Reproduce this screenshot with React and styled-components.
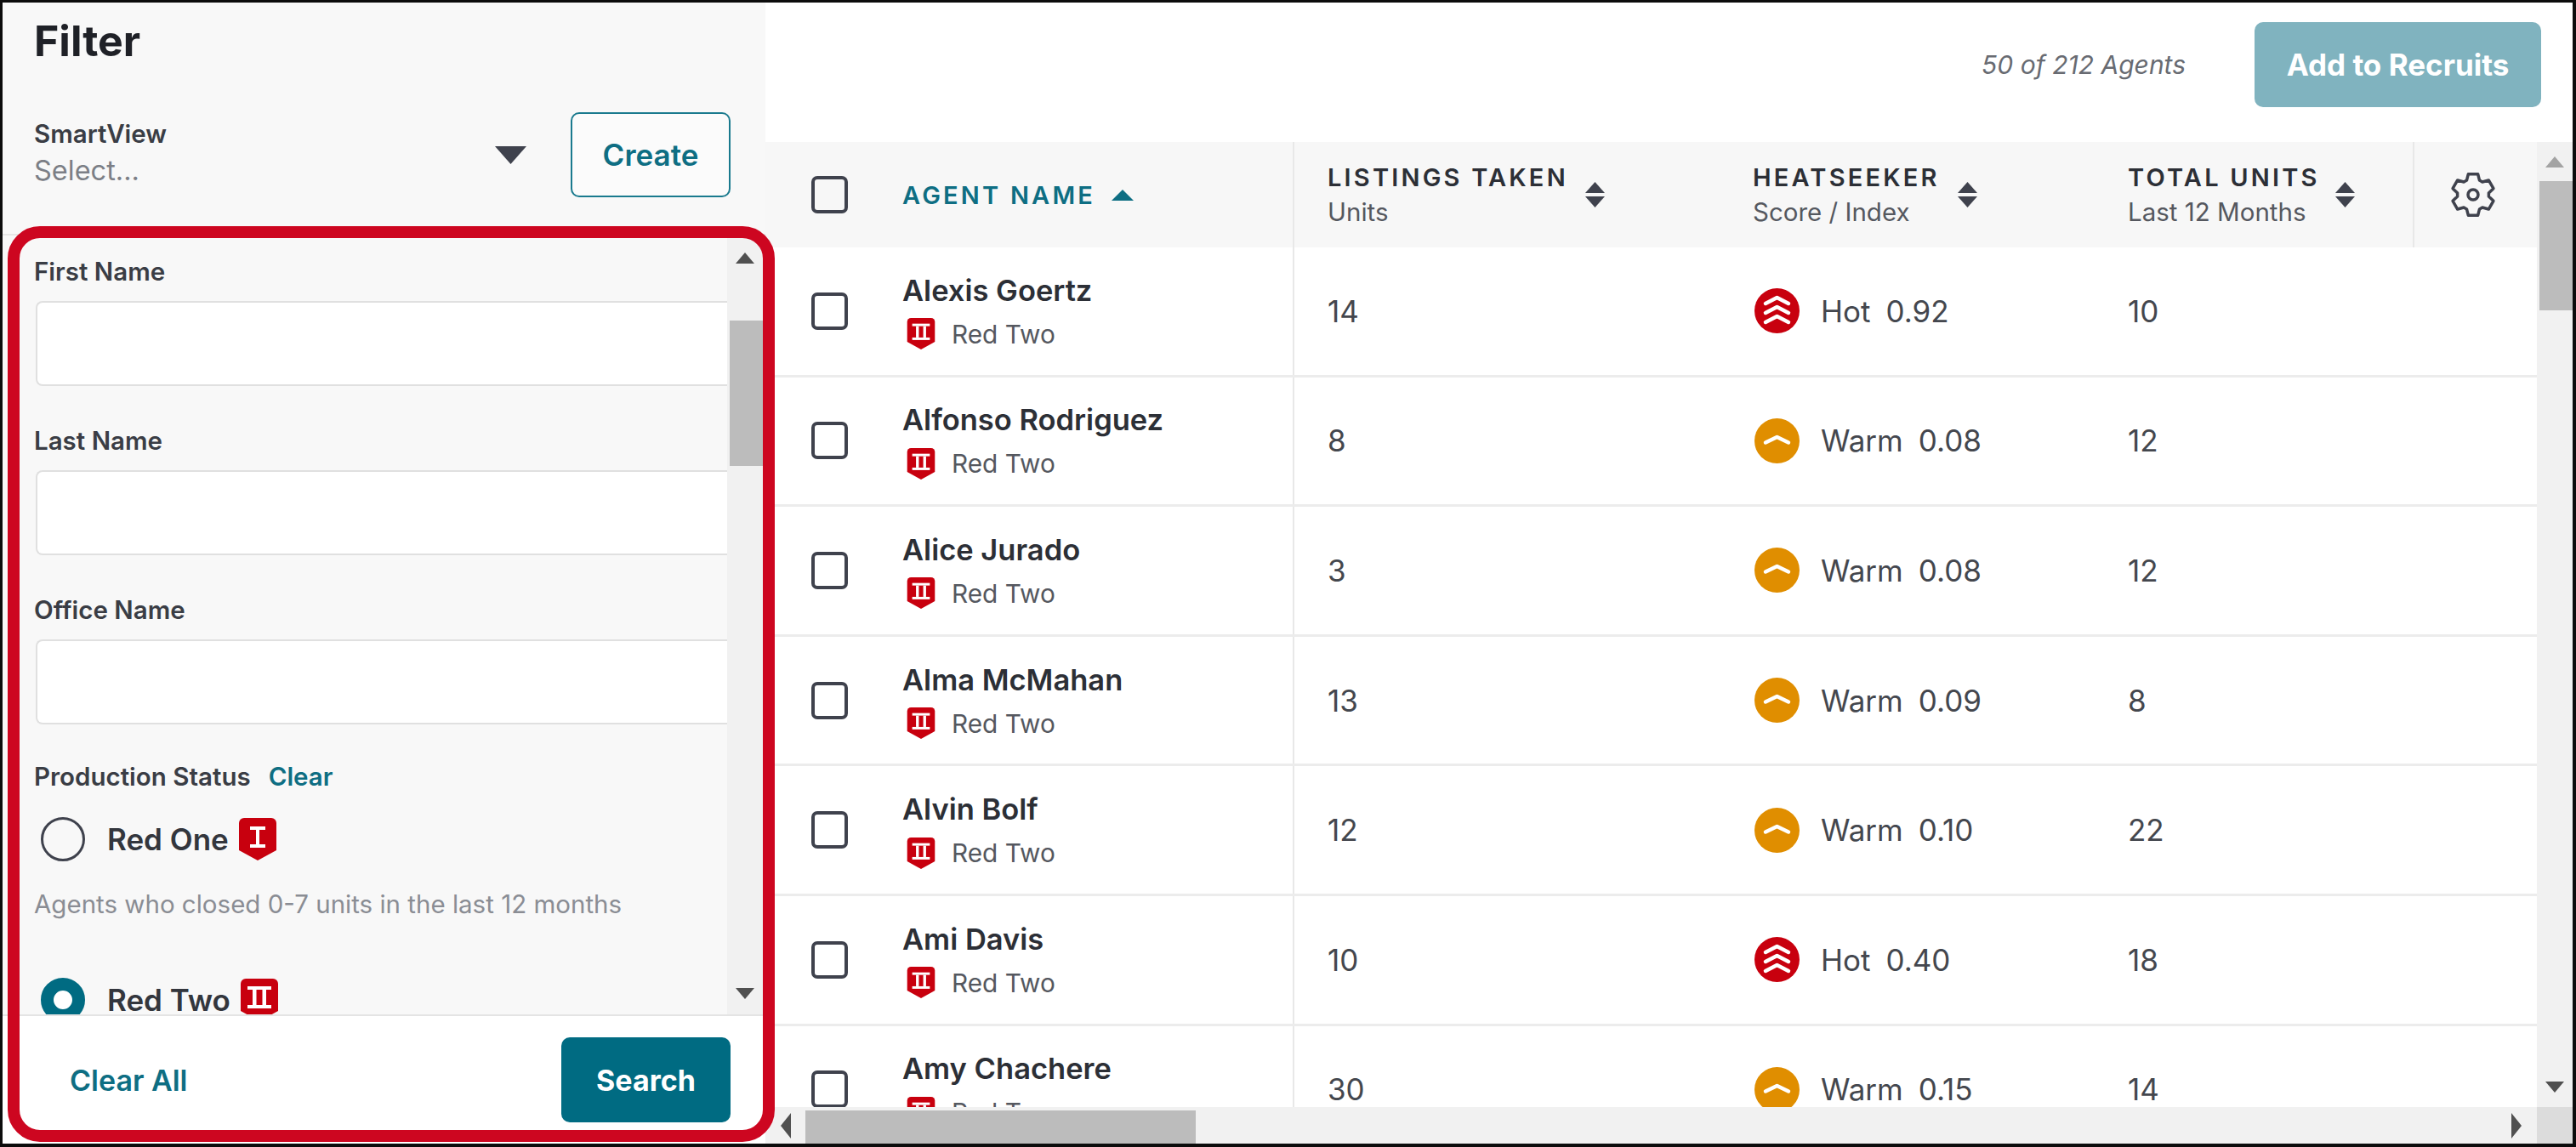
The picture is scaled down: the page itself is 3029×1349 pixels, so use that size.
import React from 'react';
import styled, { createGlobalStyle } from 'styled-components';

const GlobalStyle = createGlobalStyle`
  html, body { margin: 0; padding: 0; background: #fff; }
  body { font-family: "Inter", "Open Sans", sans-serif; color: #2c2f36; }
  * { box-sizing: border-box; }
`;

const Frame = styled.div`
  position: relative;
  display: flex;
  width: 3029px;
  height: 1349px;
  overflow: hidden;
  border-style: solid;
  border-color: #0c0c0c;
  border-width: 3px 4px 4px 3px;
  background: #fff;
`;

/* the red call-out drawn on top of the screenshot */
const Highlight = styled.div`
  position: absolute;
  left: 6px;
  top: 263px;
  width: 902px;
  height: 1077px;
  border: 14px solid #cd0620;
  border-radius: 38px;
  pointer-events: none;
`;

const Sidebar = styled.aside`
  display: flex;
  flex-direction: column;
  flex: none;
  width: 897px;
  height: 100%;
  background: #f8f8f8;
`;

const SidebarHead = styled.div`
  flex: none;
  height: 274px;
  padding-top: 17px;
  border-bottom: 2px solid #e6e6e6;
`;

const Title = styled.h1`
  margin: 0 0 0 37px;
  font-size: 50px;
  line-height: 56px;
  font-weight: 700;
  color: #1f2127;
`;

const SmartRow = styled.div`
  display: flex;
  align-items: center;
  margin-top: 56px;
  padding: 0 41px 0 37px;
`;

const SmartCol = styled.div`
  flex: 1;
  padding-bottom: 6px;
`;

const Label = styled.div`
  font-size: 29.5px;
  line-height: 36px;
  font-weight: 600;
  color: #3a3d45;
`;

const Placeholder = styled.div`
  margin-top: 8px;
  font-size: 32.5px;
  line-height: 36px;
  color: #7c7f86;
`;

const Caret = styled.svg`
  flex: none;
  width: 37px;
  height: 21px;
  margin-right: 52px;
  fill: #3f424d;
`;

const OutlineButton = styled.button`
  flex: none;
  width: 188px;
  height: 100px;
  border: 2px solid #1a7a8e;
  border-radius: 10px;
  background: #fbfbfb;
  color: #0e6e83;
  font-family: inherit;
  font-size: 35px;
  font-weight: 600;
`;

const FilterBody = styled.div`
  display: flex;
  flex: 1;
  min-height: 0;
`;

const FilterForm = styled.div`
  flex: 1;
  min-width: 0;
  overflow: hidden;
  padding: 24px 0 0 37px;
`;

const Field = styled.div`
  margin-bottom: 46px;
`;

const Input = styled.input`
  display: block;
  width: calc(100% - 2px);
  height: 100px;
  margin: 17px 0 0 2px;
  border: 2px solid #e0e0e0;
  border-right: 0;
  border-radius: 8px 0 0 8px;
  background: #fff;
`;

const StatusRow = styled.div`
  display: flex;
  gap: 21px;
  font-size: 29.5px;
  line-height: 30px;
  font-weight: 600;
  color: #3a3d45;
`;

const ClearLink = styled.a`
  color: #0e6e83;
`;

const RadioRow = styled.div`
  display: flex;
  align-items: center;
  height: 52px;
  margin: ${({ $top }) => $top}px 0 0 8px;
`;

const Radio = styled.span`
  flex: none;
  width: 52px;
  height: 52px;
  margin-right: 26px;
  border-radius: 50%;
  border: ${({ $on }) => ($on ? '15px solid #006b82' : '3px solid #3f424d')};
  background: ${({ $on }) => ($on ? '#fff' : 'transparent')};
`;

const RadioText = styled.span`
  margin-right: 12px;
  font-size: 35px;
  font-weight: 600;
  color: #33363d;
`;

const Hint = styled.div`
  margin-top: 32px;
  font-size: 29.5px;
  line-height: 36px;
  color: #8a8d94;
`;

const FilterFoot = styled.div`
  display: flex;
  align-items: center;
  justify-content: space-between;
  flex: none;
  height: 152px;
  padding: 0 41px 0 79px;
  border-top: 2px solid #e4e4e4;
  background: #fff;
`;

const FootLink = styled.a`
  color: #0e6e83;
  font-size: 34px;
  font-weight: 600;
`;

const SolidButton = styled.button`
  flex: none;
  width: ${({ $w }) => $w}px;
  height: 100px;
  border: 0;
  border-radius: 10px;
  background: ${({ $pale }) => ($pale ? '#80b3bf' : '#006b82')};
  color: #fff;
  font-family: inherit;
  font-size: ${({ $pale }) => ($pale ? 35 : 34)}px;
  font-weight: 700;
`;

const Scrollbar = styled.div`
  display: flex;
  flex-direction: column;
  flex: none;
  width: 42px;
  margin-right: ${({ $gap }) => $gap || 0}px;
  background: #f1f1f1;
`;

const ArrowSlot = styled.div`
  display: flex;
  align-items: center;
  justify-content: center;
  flex: none;
  height: ${({ $h }) => $h}px;
  fill: ${({ $dim }) => ($dim ? '#a3a3a3' : '#505050')};
`;

const Thumb = styled.div`
  flex: none;
  height: ${({ $h }) => $h}px;
  margin: ${({ $top }) => $top || 0}px 0 0 3px;
  background: #bcbcbc;
`;

const Spacer = styled.div`
  flex: 1;
`;

const Main = styled.main`
  display: flex;
  flex-direction: column;
  flex: 1;
  min-width: 0;
  height: 100%;
`;

const TopBar = styled.div`
  display: flex;
  align-items: center;
  justify-content: flex-end;
  flex: none;
  height: 164px;
  padding: 23px 37px 41px 0;
`;

const Count = styled.span`
  margin-right: 81px;
  font-size: 30px;
  font-style: italic;
  color: #686b72;
`;

const TableWrap = styled.div`
  display: flex;
  flex: 1;
  min-height: 0;
`;

const Table = styled.div`
  flex: 1;
  min-width: 0;
  overflow: hidden;
`;

const columns = '161px 459px 541px 441px 335px 146px';

const HeadRow = styled.div`
  display: grid;
  grid-template-columns: ${columns};
  height: 124px;
  background: #f7f7f7;
`;

const Row = styled.div`
  display: grid;
  grid-template-columns: ${columns};
  height: 152.6px;
  border-bottom: 3px solid #ececec;
`;

const CheckCell = styled.div`
  display: flex;
  align-items: center;
  padding-left: 54px;
`;

const Checkbox = styled.span`
  width: 43px;
  height: 44px;
  border: 4px solid #3f424d;
  border-radius: 7px;
`;

const Cell = styled.div`
  display: flex;
  align-items: center;
  ${({ $rule }) => $rule && 'border-left: 2px solid #e8e8e8; padding-left: 39px;'}
  ${({ $end }) => $end && 'border-left: 2px solid #e8e8e8; justify-content: center; padding-right: 6px;'}
  font-size: 35px;
  color: #44474e;
`;

const SortName = styled.div`
  display: flex;
  align-items: center;
  gap: 19px;
  font-size: 29px;
  font-weight: 600;
  letter-spacing: 3.2px;
  color: #0e6e83;
`;

const HeadText = styled.div`
  width: ${({ $w }) => $w}px;
  line-height: 41px;
`;

const HeadTitle = styled.div`
  font-size: 29px;
  font-weight: 600;
  letter-spacing: 3.2px;
  white-space: nowrap;
  color: #2c2f36;
`;

const HeadSub = styled.div`
  font-size: 29.5px;
  color: #55585f;
`;

const SortIcon = styled.svg`
  flex: none;
  width: 23px;
  height: 30px;
  margin-left: 21px;
  fill: #3f424d;
`;

const NameCell = styled.div`
  display: flex;
  flex-direction: column;
  justify-content: center;
  gap: 11px;
  padding-top: 3px;
`;

const Name = styled.div`
  font-size: 34.5px;
  line-height: 40px;
  font-weight: 600;
  color: #2c2f36;
`;

const Rank = styled.div`
  display: flex;
  align-items: center;
  gap: 19px;
  height: 40px;
  padding-left: 5px;
  font-size: 29.8px;
  color: #55585f;
`;

const Score = styled.span`
  margin-left: 18px;
`;

const HeatIcon = styled.svg`
  flex: none;
  width: 53px;
  height: 53px;
  margin: 0 25px 0 2px;
`;

const HScroll = styled.div`
  display: flex;
  align-items: stretch;
  flex: none;
  height: 43px;
  background: #f1f1f1;
`;

const HArrow = styled.div`
  display: flex;
  align-items: center;
  justify-content: center;
  flex: none;
  width: ${({ $w }) => $w}px;
  fill: #505050;
`;

const HThumb = styled.div`
  flex: none;
  width: 459px;
  margin-top: 4px;
  background: #bcbcbc;
`;

const Corner = styled.div`
  flex: none;
  width: 42px;
  background: #dcdcdc;
`;

const UpArrow = () => (
  <svg width="22" height="13" viewBox="0 0 22 13"><path d="M11 0 22 13H0z" /></svg>
);

const DownArrow = () => (
  <svg width="22" height="13" viewBox="0 0 22 13"><path d="M0 0h22L11 13z" /></svg>
);

const SideArrow = ({ flip }) => (
  <svg width="12" height="30" viewBox="0 0 12 30" style={{ transform: flip ? 'scaleX(-1)' : undefined }}>
    <path d="M0 0 12 15 0 30z" />
  </svg>
);

const SortGlyph = () => (
  <SortIcon viewBox="0 0 23 30">
    <path d="M11.5 0 23 13H0z" />
    <path d="M0 17h23L11.5 30z" />
  </SortIcon>
);

const RankBadge = ({ level, small }) => (
  <svg width={small ? 34 : 44} height={small ? 37 : 50} viewBox="0 0 44 50" style={{ flex: 'none' }}>
    <path d="M6 0h32a6 6 0 0 1 6 6v32L22 50 0 38V6a6 6 0 0 1 6-6z" fill="#c8000e" />
    {level === 1 ? (
      <path d="M13 10h18v4h-7v17h7v4H13v-4h7V14h-7z" fill="#fff" />
    ) : (
      <g fill="#fff">
        <rect x="8" y="9" width="28" height="4" />
        <rect x="8" y="31" width="28" height="4" />
        <rect x="14" y="13" width="4.500" height="18" />
        <rect x="25.500" y="13" width="4.500" height="18" />
      </g>
    )}
  </svg>
);

const Heat = ({ hot }) => (
  <HeatIcon viewBox="0 0 53 53">
    <circle cx="26.5" cy="26.5" r="26.5" fill={hot ? '#c8000e' : '#e08e00'} />
    <g fill="none" stroke="#fff" strokeWidth="4.500" strokeLinecap="round" strokeLinejoin="round">
      {hot ? (
        <>
          <path d="M13 18 26.500 11 40 18" />
          <path d="M13 29 26.500 22 40 29" />
          <path d="M13 40 26.500 33 40 40" />
        </>
      ) : (
        <path d="M13 28.500 26.500 22 40 28.500" />
      )}
    </g>
  </HeatIcon>
);

// six teeth, one pointing straight up
const gearPath = () => {
  const pts = [];
  for (let i = 0; i < 6; i++) {
    const a = -90 + i * 60;
    [[18.5, -24], [25, -13], [25, 13], [18.5, 24]].forEach(([r, d]) => {
      const t = ((a + d) * Math.PI) / 180;
      pts.push(`${(27 + r * Math.cos(t)).toFixed(2)} ${(27 + r * Math.sin(t)).toFixed(2)}`);
    });
  }
  return `M${pts.join('L')}Z`;
};

const Gear = () => (
  <svg width="54" height="54" viewBox="0 0 54 54" fill="none" stroke="#3f424d" strokeWidth="3.500" strokeLinejoin="round">
    <path d={gearPath()} />
    <circle cx="27" cy="27" r="6" />
  </svg>
);

const agents = [
  { name: 'Alexis Goertz', listings: 14, hot: true, score: '0.92', units: 10 },
  { name: 'Alfonso Rodriguez', listings: 8, hot: false, score: '0.08', units: 12 },
  { name: 'Alice Jurado', listings: 3, hot: false, score: '0.08', units: 12 },
  { name: 'Alma McMahan', listings: 13, hot: false, score: '0.09', units: 8 },
  { name: 'Alvin Bolf', listings: 12, hot: false, score: '0.10', units: 22 },
  { name: 'Ami Davis', listings: 10, hot: true, score: '0.40', units: 18 },
  { name: 'Amy Chachere', listings: 30, hot: false, score: '0.15', units: 14 },
];

const heads = [
  { title: 'LISTINGS TAKEN', sub: 'Units', rule: true, w: 282 },
  { title: 'HEATSEEKER', sub: 'Score / Index', w: 220 },
  { title: 'TOTAL UNITS', sub: 'Last 12 Months', w: 223 },
];

const App = () => (
  <Frame>
    <GlobalStyle />
    <Sidebar>
      <SidebarHead>
        <Title>Filter</Title>
        <SmartRow>
          <SmartCol>
            <Label>SmartView</Label>
            <Placeholder>Select...</Placeholder>
          </SmartCol>
          <Caret viewBox="0 0 37 21"><path d="M0 0h37L18.500 21z" /></Caret>
          <OutlineButton>Create</OutlineButton>
        </SmartRow>
      </SidebarHead>
      <FilterBody>
        <FilterForm>
          {['First Name', 'Last Name', 'Office Name'].map((label) => (
            <Field key={label}>
              <Label>{label}</Label>
              <Input />
            </Field>
          ))}
          <StatusRow>
            <span>Production Status</span>
            <ClearLink>Clear</ClearLink>
          </StatusRow>
          <RadioRow $top={33}>
            <Radio />
            <RadioText>Red One</RadioText>
            <RankBadge level={1} />
          </RadioRow>
          <Hint>Agents who closed 0-7 units in the last 12 months</Hint>
          <RadioRow $top={69}>
            <Radio $on />
            <RadioText>Red Two</RadioText>
            <RankBadge level={2} />
          </RadioRow>
        </FilterForm>
        <Scrollbar $gap={3}>
          <ArrowSlot $h={52}><UpArrow /></ArrowSlot>
          <Thumb $h={171} $top={48} />
          <Spacer />
          <ArrowSlot $h={50}><DownArrow /></ArrowSlot>
        </Scrollbar>
      </FilterBody>
      <FilterFoot>
        <FootLink>Clear All</FootLink>
        <SolidButton $w={199}>Search</SolidButton>
      </FilterFoot>
    </Sidebar>

    <Main>
      <TopBar>
        <Count>50 of 212 Agents</Count>
        <SolidButton $w={337} $pale>Add to Recruits</SolidButton>
      </TopBar>
      <TableWrap>
        <Table>
          <HeadRow>
            <CheckCell><Checkbox /></CheckCell>
            <Cell>
              <SortName>
                AGENT NAME
                <svg width="26" height="13" viewBox="0 0 26 13" fill="#0e6e83"><path d="M13 0 26 13H0z" /></svg>
              </SortName>
            </Cell>
            {heads.map((h) => (
              <Cell key={h.title} $rule={h.rule}>
                <HeadText $w={h.w}>
                  <HeadTitle>{h.title}</HeadTitle>
                  <HeadSub>{h.sub}</HeadSub>
                </HeadText>
                <SortGlyph />
              </Cell>
            ))}
            <Cell $end><Gear /></Cell>
          </HeadRow>
          {agents.map((a) => (
            <Row key={a.name}>
              <CheckCell><Checkbox /></CheckCell>
              <NameCell>
                <Name>{a.name}</Name>
                <Rank><RankBadge level={2} small />Red Two</Rank>
              </NameCell>
              <Cell $rule>{a.listings}</Cell>
              <Cell>
                <Heat hot={a.hot} />
                {a.hot ? 'Hot' : 'Warm'}
                <Score>{a.score}</Score>
              </Cell>
              <Cell>{a.units}</Cell>
              <Cell />
            </Row>
          ))}
        </Table>
        <Scrollbar>
          <ArrowSlot $h={46} $dim><UpArrow /></ArrowSlot>
          <Thumb $h={152} />
          <Spacer />
          <ArrowSlot $h={48}><DownArrow /></ArrowSlot>
        </Scrollbar>
      </TableWrap>
      <HScroll>
        <HArrow $w={47}><SideArrow flip /></HArrow>
        <HThumb />
        <Spacer />
        <HArrow $w={48}><SideArrow /></HArrow>
        <Corner />
      </HScroll>
    </Main>
    <Highlight />
  </Frame>
);

export default App;
